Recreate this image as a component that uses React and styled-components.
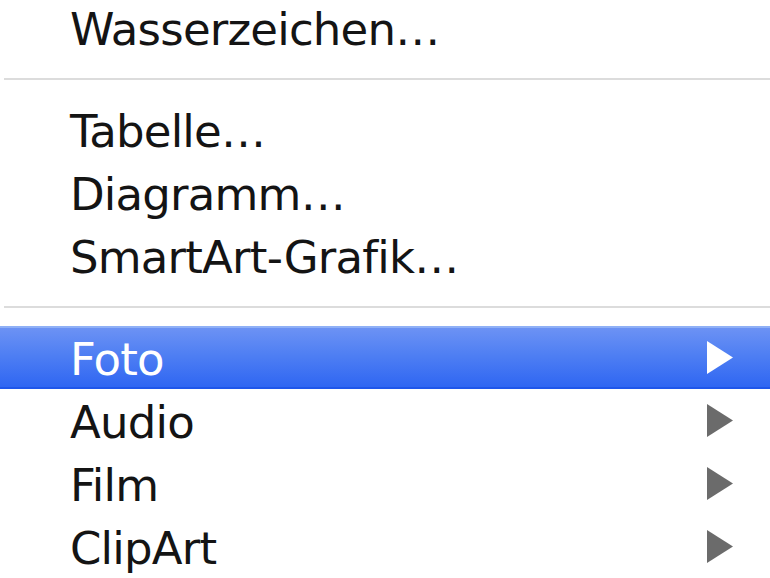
import styled, { createGlobalStyle } from "styled-components";

const GlobalStyle = createGlobalStyle`
  html, body {
    margin: 0;
    padding: 0;
    background: #ffffff;
    overflow: hidden;
  }
`;

const groups = [
  [{ label: "Wasserzeichen…" }],
  [{ label: "Tabelle…" }, { label: "Diagramm…" }, { label: "SmartArt-Grafik…" }],
  [
    { label: "Foto", submenu: true, active: true },
    { label: "Audio", submenu: true },
    { label: "Film", submenu: true },
    { label: "ClipArt", submenu: true },
  ],
];

const Arrow = ({ active }) => (
  <ArrowIcon viewBox="0 0 26 33" $active={active}>
    <polygon points="0,0 26,16.5 0,33" />
  </ArrowIcon>
);

const App = () => (
  <>
    <GlobalStyle />
    <Menu>
      {groups.map((group, gi) => (
        <Group key={gi}>
          {gi > 0 && <Separator />}
          {group.map((item) => (
            <MenuItem key={item.label} $active={item.active}>
              <Label>{item.label}</Label>
              {item.submenu && <Arrow active={item.active} />}
            </MenuItem>
          ))}
        </Group>
      ))}
    </Menu>
  </>
);
export default App;

const Menu = styled.div`
  display: flex;
  flex-direction: column;
  width: 770px;
  margin-top: -4px;
  font-family: "DejaVu Sans", "Liberation Sans", sans-serif;
`;

const Group = styled.div`
  display: flex;
  flex-direction: column;
`;

const Separator = styled.div`
  height: 39px;
  display: flex;
  align-items: center;
  padding-left: 4px;

  &::after {
    content: "";
    flex: 1;
    height: 2px;
    background: #dcdcdc;
  }
`;

const MenuItem = styled.div`
  display: flex;
  align-items: center;
  justify-content: space-between;
  height: 63px;
  box-sizing: border-box;
  padding: 0 37px 0 70px;
  color: ${(p) => (p.$active ? "#ffffff" : "#141414")};
  background: ${(p) =>
    p.$active
      ? "linear-gradient(to bottom, #6c92f4 0%, #4f7ff3 45%, #2f66f2 100%)"
      : "transparent"};
  border-top: ${(p) => (p.$active ? "2px solid #8fb0f6" : "none")};
  border-bottom: ${(p) => (p.$active ? "2px solid #1f56ea" : "none")};
`;

const Label = styled.span`
  font-size: 45px;
  letter-spacing: -0.8px;
  line-height: 1;
  padding-top: 4px;
`;

const ArrowIcon = styled.svg`
  width: 26px;
  height: 33px;
  fill: ${(p) => (p.$active ? "#ffffff" : "#6b6b6b")};
`;
